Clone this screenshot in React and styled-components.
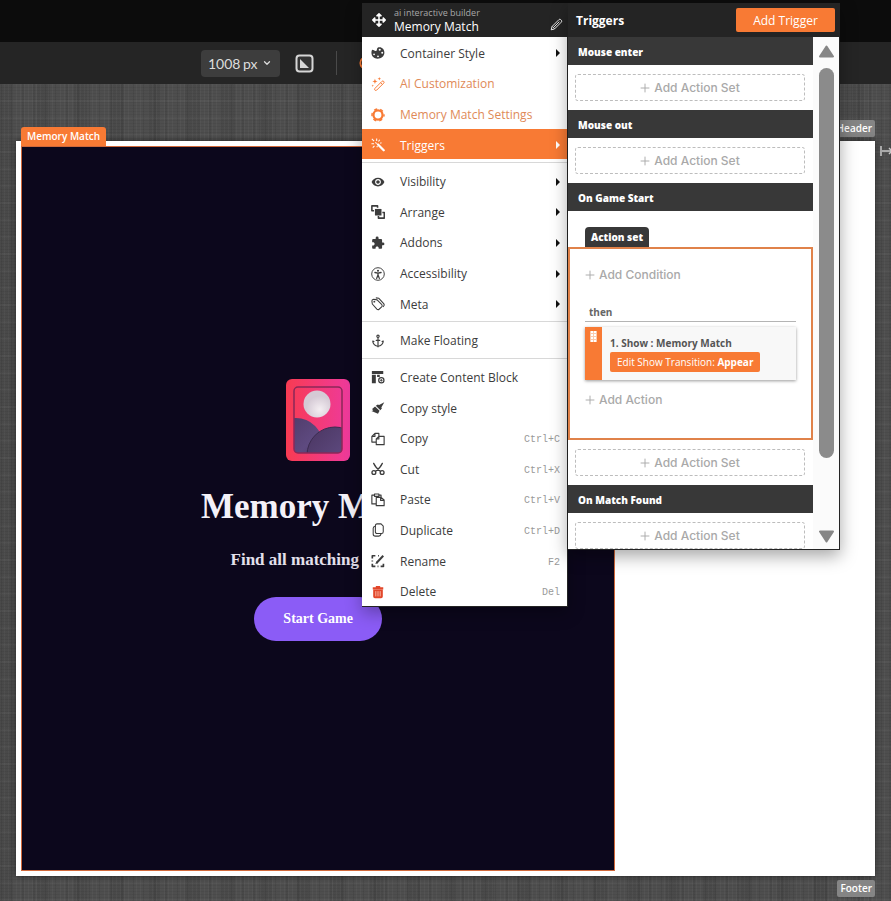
import { useState } from "react"
import styled, { createGlobalStyle, css } from "styled-components"
import { FaArrowsAlt } from "react-icons/fa"
import { MdVisibility, MdExtension } from "react-icons/md"
import { ChevronDown, Anchor } from "lucide-react"

const ORANGE = "#f87a34"
const DARK = "#242424"
const BAR = "#383838"

const GlobalStyle = createGlobalStyle`
    *, *::before, *::after {
        box-sizing: border-box;
    }
    body {
        margin: 0;
        font-family: "Open Sans", "Noto Sans", sans-serif;
        font-size: 12px;
    }
    button, input, select {
        font: inherit;
        color: inherit;
        border: none;
        background: none;
        padding: 0;
        margin: 0;
    }
    button {
        cursor: pointer;
    }
    svg {
        display: block;
        flex-shrink: 0;
    }
`

const Page = styled.div`
    position: relative;
    min-height: 100vh;
    display: flex;
    flex-direction: column;
    overflow: hidden;
`

const TopBar = styled.header`
    height: 42px;
    background: #0c0c0c;
`

const Toolbar = styled.div`
    height: 42px;
    padding-left: 201px;
    display: flex;
    align-items: center;
    background: #252525;
    color: #dcdcdc;
`

const SizeBox = styled.div`
    width: 79px;
    height: 27px;
    padding: 0 8px 0 7px;
    display: flex;
    align-items: center;
    border-radius: 4px;
    background: #3d3d3d;
    font-family: Lato, sans-serif;
    font-size: 14px;
`

const SizeInput = styled.input`
    width: 35px;
`

const UnitSelect = styled.select`
    appearance: none;
    width: 19px;
`

const FitButton = styled.button`
    margin: 0 22px 0 15px;
`

const ToolDivider = styled.span`
    width: 1px;
    height: 24px;
    margin-right: 22px;
    background: #4a4a4a;
`

const Workspace = styled.main`
    flex: 1;
    padding: 36px 0 4px 16px;
    display: flex;
    flex-direction: column;
    background-color: #4e4e4e;
    background-image:
        repeating-linear-gradient(90deg, rgba(255, 255, 255, 0.03) 0 1px, transparent 1px 4px),
        repeating-linear-gradient(0deg, rgba(0, 0, 0, 0.05) 0 1px, transparent 1px 3px),
        repeating-linear-gradient(90deg, rgba(0, 0, 0, 0.07) 0 2px, transparent 2px 11px),
        repeating-linear-gradient(0deg, rgba(255, 255, 255, 0.03) 0 2px, transparent 2px 17px),
        repeating-linear-gradient(90deg, rgba(0, 0, 0, 0.06) 0 13px, transparent 13px 37px);
`

const ZoneLabel = styled.span`
    align-self: flex-end;
    height: 17px;
    margin-right: 16px;
    padding: 0 3px;
    border-radius: 2px;
    background: #858585;
    color: #fff;
    font-size: 10px;
    font-weight: 600;
    line-height: 17px;
`

const CanvasRow = styled.div`
    flex: 1;
    margin: 4px 0;
    display: flex;
`

const Canvas = styled.div`
    flex: 1;
    padding: 5px;
    display: flex;
    background: #fff;
    box-shadow: 0 0 6px rgba(0, 0, 0, 0.5);
`

const Gutter = styled.div`
    width: 16px;
    padding: 4px 0 0 5px;
    overflow: hidden;
    color: #c8c8c8;
`

const GameBlock = styled.section`
    position: relative;
    width: 70%;
    padding-top: 3px;
    display: flex;
    flex-direction: column;
    align-items: center;
    justify-content: center;
    border: 1px solid #d0683a;
    background: #0c071c;
    font-family: "Liberation Serif", serif;
    font-weight: bold;
    color: #f4f1f8;
`

const BlockTag = styled.span`
    position: absolute;
    top: -20px;
    left: -1px;
    height: 19px;
    padding: 0 6px;
    border-radius: 3px 3px 0 0;
    background: ${ORANGE};
    color: #fff;
    font: 600 10px/19px "Open Sans", sans-serif;
`

const GameTitle = styled.h1`
    margin: 24px 0 20px;
    font-size: 35px;
    line-height: 44px;
`

const GameText = styled.p`
    margin: 0;
    font-size: 17px;
    line-height: 22px;
    color: #e4e0ec;
`

const StartButton = styled.button`
    width: 128px;
    height: 44px;
    margin-top: 26px;
    border-radius: 22px;
    background: #8b5cf6;
    color: #fff;
    font-size: 14px;
`

const Popup = styled.div`
    position: absolute;
    top: 3px;
    left: 362px;
    display: flex;
    align-items: flex-start;
`

const Menu = styled.nav`
    width: 206px;
    height: 604px;
    display: flex;
    flex-direction: column;
    border: solid ${DARK};
    border-width: 0 1px 1px 0;
    background: #fff;
    color: #3c3c3c;
    box-shadow: 0 6px 16px rgba(0, 0, 0, 0.3);
`

const MenuHeader = styled.div`
    height: 34px;
    padding: 0 4px 0 10px;
    display: flex;
    align-items: center;
    background: ${DARK};
    color: #fff;
`

const MenuNames = styled.div`
    flex: 1;
    margin-left: 8px;
`

const MenuKind = styled.div`
    font-size: 9px;
    line-height: 13px;
    color: #a8a8a8;
`

const MenuName = styled.div`
    line-height: 16px;
`

const EditButton = styled.button`
    margin-top: 8px;
`

const MenuItem = styled.button`
    flex: 1;
    padding: 2px 7px 0 9px;
    display: flex;
    align-items: center;
    text-align: left;
    ${({ $accent }) => $accent && css`
        color: #e08a58;
        svg {
            color: ${ORANGE};
        }
    `}
    ${({ $active }) => $active && css`
        background: ${ORANGE};
        color: #fff;
    `}
    ${({ $danger }) => $danger && css`
        svg {
            color: #e2472a;
        }
    `}
`

const MenuText = styled.span`
    flex: 1;
    margin-left: 15px;
    white-space: nowrap;
`

const Shortcut = styled.kbd`
    padding-top: 2px;
    font: 10px "Liberation Mono", monospace;
    color: #999;
`

const Arrow = styled.span`
    border: solid transparent;
    border-width: 4px 0 4px 4px;
    border-left-color: ${({ $light }) => ($light ? "#fff" : "#111")};
`

const Divider = styled.hr`
    width: 100%;
    height: 6px;
    margin: 0;
    border: solid #fff;
    border-width: 3px 0 2px;
    background: #d8d8d8;
`

const Panel = styled.section`
    width: 272px;
    height: 547px;
    display: flex;
    flex-direction: column;
    border: solid ${DARK};
    border-width: 0 1px 1px 0;
    background: #fff;
    box-shadow: 0 6px 16px rgba(0, 0, 0, 0.35);
`

const PanelHeader = styled.div`
    height: 34px;
    padding: 0 4px 0 8px;
    display: flex;
    align-items: center;
    justify-content: space-between;
    background: ${DARK};
`

const PanelTitle = styled.h2`
    margin: 0;
    font-size: 12px;
    font-weight: bold;
    color: #fff;
`

const AddTrigger = styled.button`
    width: 99px;
    height: 24px;
    border-radius: 2px;
    background: ${ORANGE};
    color: #fff;
`

const PanelBody = styled.div`
    flex: 1;
    min-height: 0;
    display: flex;
`

const TriggerList = styled.div`
    flex: 1;
    overflow: hidden;
`

const TriggerName = styled.h3`
    height: 28px;
    margin: 0;
    padding-left: 10px;
    background: ${BAR};
    color: #fff;
    font-size: 10px;
    font-weight: 800;
    line-height: 31px;
`

const AddLink = styled.button`
    display: flex;
    align-items: center;
    gap: 4px;
    color: #a9a9a9;
    font-family: Inter, sans-serif;
    font-size: 12px;
    font-weight: 500;
    line-height: 14px;
`

const AddActionSet = styled(AddLink)`
    width: calc(100% - 15px);
    height: 27px;
    margin: 9px 8px 9px 7px;
    justify-content: center;
    border: 1px dashed #bdbdbd;
    border-radius: 3px;
`

const ActionTab = styled.div`
    width: 64px;
    height: 20px;
    margin: 16px 0 0 17px;
    border-radius: 4px 4px 0 0;
    background: ${BAR};
    color: #fff;
    font-size: 10px;
    font-weight: 800;
    line-height: 20px;
    text-align: center;
`

const ActionBox = styled.div`
    height: 193px;
    padding: 19px 15px 0;
    border: 2px solid #e0824a;
`

const Then = styled.div`
    height: 33px;
    margin: 7px 0 5px;
    padding: 16px 0 0 4px;
    border-bottom: 1px solid #b4b4b4;
    color: #666;
    font-size: 10px;
    font-weight: bold;
    line-height: 14px;
`

const ActionCard = styled.div`
    height: 53px;
    margin-bottom: 13px;
    display: flex;
    background: #f8f8f8;
    box-shadow: 0 1px 3px rgba(0, 0, 0, 0.4);
`

const Grip = styled.div`
    width: 17px;
    padding: 4px 0 0 5px;
    background: ${ORANGE};
    color: #fff;
`

const ActionInfo = styled.div`
    padding: 7px 8px;
    color: #555;
    font-size: 10px;
    font-weight: bold;
    line-height: 18px;
`

const TransitionButton = styled.button`
    display: block;
    height: 20px;
    padding: 0 7px;
    border-radius: 2px;
    background: ${ORANGE};
    color: #fff;
    font-size: 10px;
    font-weight: 500;
    white-space: nowrap;
`

const Scrollbar = styled.div`
    width: 26px;
    padding: 8px 5px 6px 6px;
    display: flex;
    flex-direction: column;
    background: #fbfbfb;
    color: #868686;
`

const ScrollTrack = styled.div`
    flex: 1;
    padding: 10px 0 72px;
    display: flex;
`

const ScrollThumb = styled.div`
    flex: 1;
    border-radius: 8px;
    background: #8b8b8b;
`

const Svg = ({ children, size = 14, ...rest }) => (
    <svg width={size} height={size} viewBox="0 0 16 16" fill="none" stroke="currentColor" strokeWidth="1.4" strokeLinejoin="round" {...rest}>
        {children}
    </svg>
)

const PlusIcon = () => (
    <Svg size={10} strokeWidth="1.5"><path d="M8 1v14M1 8h14" /></Svg>
)

const PencilIcon = () => (
    <Svg size={13} strokeWidth="1.1">
        <path d="M1.5 14.5l1-4L11 2q1-1 2.200 0l.8.8q1 1 0 2.200L5.500 13.500zM3 10.500l2.500 2.500M5 11l6.500-6.500" />
    </Svg>
)

const PaletteIcon = () => (
    <Svg>
        <path
            fill="currentColor"
            stroke="none"
            fillRule="evenodd"
            d="M1.200 4.500c1.500-.5 2.800 1.800 4.600 1.200C7.500 5 6 2.500 8.500 1.500c3.500-1 6.800 2 6.800 6 0 4.500-3.600 7-7.800 7C3.500 14.500.5 11.500.5 8c0-1.500.2-2.800.7-3.500zM10 3a1.200 1.200 0 100 2.400A1.200 1.200 0 0010 3zm2.800 3.700a1.100 1.100 0 100 2.200 1.100 1.100 0 000-2.200zM3.500 8.500a1 1 0 100 2 1 1 0 000-2zm4.500 2.300a1 1 0 100 2 1 1 0 000-2z"
        />
    </Svg>
)

const AiIcon = () => (
    <Svg strokeWidth="1.100">
        <path d="M4.500 13l8-8q1-1 2 0t0 2l-8 8q-1 .8-2 0t0-2zM11 6.500l2 2" />
        <path fill="currentColor" stroke="none" d="M4.500 2l.8 2.200L7.500 5l-2.200.8L4.500 8l-.8-2.200L1.500 5l2.200-.8zM9.500 0l.5 1.500 1.500.5-1.500.5-.5 1.500L9 2.500 7.500 2 9 1.500zM2 8.500l.4 1.100 1.100.4-1.100.4L2 11.500l-.4-1.100L.5 10l1.100-.4z" />
    </Svg>
)

const GearIcon = () => (
    <Svg strokeWidth="2.600">
        <circle cx="8" cy="8" r="5.200" />
        <circle cx="8" cy="8" r="6.900" strokeWidth="1.600" strokeDasharray="3.600 3.625" strokeDashoffset="1.800" />
    </Svg>
)

const WandIcon = () => (
    <Svg>
        <path d="M8 7.500l6.500 6.500" strokeWidth="2.600" strokeLinecap="round" />
        <path d="M5 5l1.500 1.500M6.500.5v3M1 1l2.500 2.500M.5 6.500h3M10 2L8.500 4M2 11l2-2M7 9v1.500M12 5.500l-1.500.5" strokeWidth="1.200" />
    </Svg>
)

const ArrangeIcon = () => (
    <Svg strokeWidth="1.800">
        <path d="M3.500 6.500H1V1h6.500v2M13 8.500h2.200V15H8.500v-2.500" />
        <path fill="currentColor" stroke="none" d="M4.500 4.500h7.500v7.500H4.500z" />
    </Svg>
)

const AccessIcon = () => (
    <Svg strokeWidth="1.100">
        <circle cx="8" cy="8" r="7.200" />
        <circle cx="8" cy="4.200" r="1.200" fill="currentColor" stroke="none" />
        <path d="M4.500 6.300L8 7l3.500-.7M8 7v2.500M8 9l-1.500 4M8 9l1.500 4" strokeWidth="1.500" strokeLinecap="round" />
    </Svg>
)

const TagsIcon = () => (
    <Svg strokeWidth="1.200">
        <path d="M1 4.500L1.500 8l5.200 5.800q1.300 1.200 2.500.2l3-2.700q1.200-1.200.2-2.500L7 3.300 3 2.500Q1 2.800 1 4.500z" />
        <path d="M5.500 1l3.500.5 5.500 6q1 1.300.2 2.500l-1 1.300" />
        <circle cx="3.800" cy="5.300" r=".5" />
    </Svg>
)

const BlockIcon = () => (
    <Svg>
        <path fill="currentColor" stroke="none" d="M1 1h13v3.500H1zM1 5.500h4.500V15H1zM7 5.500h3v2.500H7z" />
        <circle cx="11.800" cy="11.800" r="3" />
        <path d="M11.800 10.300v3M10.300 11.800h3" strokeWidth="1" />
    </Svg>
)

const BrushIcon = () => (
    <Svg>
        <path fill="currentColor" stroke="none" d="M15.200 1.500l-3.400 6 .7.900-1.800 2.100-5.200-5 2.300-1.400 1.400.6zM4.600 6.200l5.200 5-1.800 3.300-7.500-3 2-.6-1.200-1.700z" />
    </Svg>
)

const CopyIcon = () => (
    <Svg strokeWidth="1.300">
        <path d="M6 11.500H1V5l3.500-3.500H9V5M1 5h3.500V1.500M6 8l3-3h6v9.500H6zM6 8h3V5" />
    </Svg>
)

const CutIcon = () => (
    <Svg strokeWidth="1.500">
        <path d="M3 1.500q2 5 8 9.300M13 1.500q-2 5-8 9.300" strokeLinecap="round" />
        <circle cx="3.300" cy="12" r="2.200" />
        <circle cx="12.700" cy="12" r="2.200" />
    </Svg>
)

const PasteIcon = () => (
    <Svg strokeWidth="1.300">
        <path d="M6 12.500H1V2.500h3M9 2.500h2.500V5M4 1.200h5v2.600H4zM6 5h5.500L15 8v6.500H6zM11 5v3.500h4" />
    </Svg>
)

const DuplicateIcon = () => (
    <Svg strokeWidth="1.200">
        <path d="M7 1h4.500L14 3.500V10q0 2-2 2H7q-2 0-2-2V3q0-2 2-2z" />
        <path d="M5 3.800Q2.500 4 2.500 6v6.500q0 2.500 2.500 2.500h4q2 0 2.500-2.500" />
    </Svg>
)

const RenameIcon = () => (
    <Svg strokeWidth="1.900">
        <path d="M1.500 5V2H5M1.500 11v3.200H5M11 14.200h3.200V11M8 2h1M1.500 7.500v1M7.500 14.200h1" />
        <path d="M6.500 10l7.500-8" strokeWidth="2.300" />
        <path d="M5 11.500l1-3 2 2z" fill="currentColor" stroke="none" />
    </Svg>
)

const TrashIcon = () => (
    <Svg>
        <path fill="currentColor" stroke="none" d="M5.500 1h5v1.500H14V5H2V2.500h3.500zM2.500 5.500h11V13q0 2-2 2h-7q-2 0-2-2z" />
        <path stroke="#fbc4b4" strokeWidth="1" d="M5.500 7v6M8 7v6M10.500 7v6" />
    </Svg>
)

const FitIcon = () => (
    <svg width="19" height="19" viewBox="0 0 19 19">
        <rect x="1.500" y="1.500" width="16" height="16" rx="3" fill="#333" stroke="#d6d6d6" strokeWidth="2" />
        <path d="M5 5v9h9z" fill="#d6d6d6" />
    </svg>
)

const CardIcon = () => (
    <svg width="64" height="82" viewBox="0 0 64 82">
        <defs>
            <linearGradient id="card" x1="0" x2="1">
                <stop offset="0" stopColor="#f83b52" />
                <stop offset="1" stopColor="#ee3a9c" />
            </linearGradient>
            <linearGradient id="hill" x1="0" x2="1" y2="1">
                <stop offset="0" stopColor="#4a3560" />
                <stop offset=".6" stopColor="#5e4a80" />
                <stop offset="1" stopColor="#43304f" />
            </linearGradient>
            <radialGradient id="moon" cx=".6" cy=".7">
                <stop offset="0" stopColor="#f4eef2" />
                <stop offset="1" stopColor="#d5cad5" />
            </radialGradient>
            <clipPath id="frame"><rect x="8" y="8" width="48" height="66" rx="4" /></clipPath>
        </defs>
        <rect width="64" height="82" rx="6" fill="url(#card)" />
        <g clipPath="url(#frame)">
            <circle cx="31" cy="25" r="13.500" fill="url(#moon)" />
            <circle cx="10" cy="66" r="27" fill="url(#hill)" />
            <circle cx="49" cy="76" r="28" fill="url(#hill)" stroke="#3c2c50" />
        </g>
        <rect x="8" y="8" width="48" height="66" rx="4" fill="none" stroke="#8a2858" strokeWidth="1.500" />
    </svg>
)

const groups = [
    [
        { label: "Container Style", icon: <PaletteIcon />, sub: true },
        { label: "AI Customization", icon: <AiIcon />, accent: true },
        { label: "Memory Match Settings", icon: <GearIcon />, accent: true },
        { label: "Triggers", icon: <WandIcon />, sub: true },
    ],
    [
        { label: "Visibility", icon: <MdVisibility size={14} />, sub: true },
        { label: "Arrange", icon: <ArrangeIcon />, sub: true },
        { label: "Addons", icon: <MdExtension size={14} />, sub: true },
        { label: "Accessibility", icon: <AccessIcon />, sub: true },
        { label: "Meta", icon: <TagsIcon />, sub: true },
    ],
    [{ label: "Make Floating", icon: <Anchor size={14} strokeWidth={2} /> }],
    [
        { label: "Create Content Block", icon: <BlockIcon /> },
        { label: "Copy style", icon: <BrushIcon /> },
        { label: "Copy", icon: <CopyIcon />, keys: "Ctrl+C" },
        { label: "Cut", icon: <CutIcon />, keys: "Ctrl+X" },
        { label: "Paste", icon: <PasteIcon />, keys: "Ctrl+V" },
        { label: "Duplicate", icon: <DuplicateIcon />, keys: "Ctrl+D" },
        { label: "Rename", icon: <RenameIcon />, keys: "F2" },
        { label: "Delete", icon: <TrashIcon />, keys: "Del", danger: true },
    ],
]

const AddSet = () => (
    <AddActionSet><PlusIcon />Add Action Set</AddActionSet>
)

const ContextMenu = () => {
    const [active, setActive] = useState("Triggers")

    return (
        <Menu>
            <MenuHeader>
                <FaArrowsAlt size={14} />
                <MenuNames>
                    <MenuKind>ai interactive builder</MenuKind>
                    <MenuName>Memory Match</MenuName>
                </MenuNames>
                <EditButton aria-label="Edit name"><PencilIcon /></EditButton>
            </MenuHeader>
            {groups.map((items, idx) => [
                idx > 0 && <Divider key={`divider-${idx}`} />,
                ...items.map(({ label, icon, sub, accent, keys, danger }) => (
                    <MenuItem
                        key={label}
                        $accent={accent}
                        $danger={danger}
                        $active={active === label}
                        onClick={() => sub && setActive(label)}
                    >
                        {icon}
                        <MenuText>{label}</MenuText>
                        {keys && <Shortcut>{keys}</Shortcut>}
                        {sub && <Arrow $light={active === label} />}
                    </MenuItem>
                )),
            ])}
        </Menu>
    )
}

const TriggersPanel = () => (
    <Panel>
        <PanelHeader>
            <PanelTitle>Triggers</PanelTitle>
            <AddTrigger>Add Trigger</AddTrigger>
        </PanelHeader>
        <PanelBody>
            <TriggerList>
                <TriggerName>Mouse enter</TriggerName>
                <AddSet />
                <TriggerName>Mouse out</TriggerName>
                <AddSet />
                <TriggerName>On Game Start</TriggerName>
                <ActionTab>Action set</ActionTab>
                <ActionBox>
                    <AddLink><PlusIcon />Add Condition</AddLink>
                    <Then>then</Then>
                    <ActionCard>
                        <Grip>
                            <svg width="7" height="11" viewBox="0 0 7 11" fill="currentColor">
                                <rect width="7" height="11" opacity=".6" />
                                <path d="M1 0h2v2H1zM4 0h2v2H4zM1 3h2v2H1zM4 3h2v2H4zM1 6h2v2H1zM4 6h2v2H4zM1 9h2v2H1zM4 9h2v2H4z" />
                            </svg>
                        </Grip>
                        <ActionInfo>
                            1. Show : Memory Match
                            <TransitionButton>Edit Show Transition: <b>Appear</b></TransitionButton>
                        </ActionInfo>
                    </ActionCard>
                    <AddLink><PlusIcon />Add Action</AddLink>
                </ActionBox>
                <AddSet />
                <TriggerName>On Match Found</TriggerName>
                <AddSet />
            </TriggerList>
            <Scrollbar>
                <button aria-label="Scroll up">
                    <svg width="15" height="13" viewBox="0 0 15 13"><path d="M7.500 1.500L14 11.500H1z" fill="currentColor" stroke="currentColor" strokeWidth="2" strokeLinejoin="round" /></svg>
                </button>
                <ScrollTrack><ScrollThumb /></ScrollTrack>
                <button aria-label="Scroll down">
                    <svg width="15" height="13" viewBox="0 0 15 13"><path d="M7.500 11.500L1 1.500h13z" fill="currentColor" stroke="currentColor" strokeWidth="2" strokeLinejoin="round" /></svg>
                </button>
            </Scrollbar>
        </PanelBody>
    </Panel>
)

const App = () => (
    <>
        <GlobalStyle />
        <Page>
            <TopBar />
            <Toolbar>
                <SizeBox>
                    <SizeInput aria-label="Page width" defaultValue="1008" />
                    <UnitSelect aria-label="Unit"><option>px</option></UnitSelect>
                    <ChevronDown size={10} strokeWidth={3} />
                </SizeBox>
                <FitButton aria-label="Fit to screen"><FitIcon /></FitButton>
                <ToolDivider />
                <Svg size={14} color={ORANGE} strokeWidth="2"><circle cx="8" cy="8" r="6.500" /></Svg>
            </Toolbar>
            <Workspace>
                <ZoneLabel>Header</ZoneLabel>
                <CanvasRow>
                    <Canvas>
                        <GameBlock>
                            <BlockTag>Memory Match</BlockTag>
                            <CardIcon />
                            <GameTitle>Memory Match</GameTitle>
                            <GameText>Find all matching pairs!</GameText>
                            <StartButton>Start Game</StartButton>
                        </GameBlock>
                    </Canvas>
                    <Gutter>
                        <svg width="12" height="12" viewBox="0 0 12 12" fill="none" stroke="currentColor" strokeWidth="1.500">
                            <path d="M1 1v10M2 6h10M9 3l3 3-3 3" />
                        </svg>
                    </Gutter>
                </CanvasRow>
                <ZoneLabel>Footer</ZoneLabel>
            </Workspace>
            <Popup>
                <ContextMenu />
                <TriggersPanel />
            </Popup>
        </Page>
    </>
)

export default App
